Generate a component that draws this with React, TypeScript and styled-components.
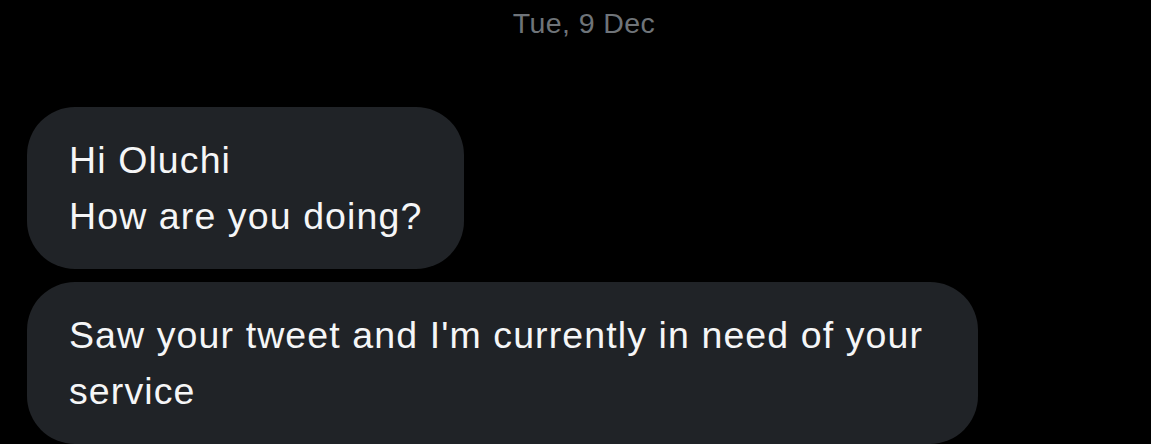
import React from "react";
import styled, { createGlobalStyle } from "styled-components";

const GlobalStyle = createGlobalStyle`
  html, body {
    margin: 0;
    padding: 0;
    background: #000000;
  }
  body {
    font-family: "Liberation Sans", Arial, sans-serif;
    -webkit-font-smoothing: antialiased;
  }
`;

const Page = styled.div`
  width: 1151px;
  height: 444px;
  box-sizing: border-box;
  overflow: hidden;
  background: #000000;
  display: flex;
  flex-direction: column;
  padding: 6px 0 0 27px;
`;

const DateLabel = styled.div`
  align-self: center;
  margin-left: -10px;
  font-size: 28.5px;
  line-height: 34px;
  color: #6f7479;
  letter-spacing: 0.4px;
`;

const Thread = styled.div`
  display: flex;
  flex-direction: column;
  align-items: flex-start;
  gap: 13px;
  margin-top: 67px;
`;

const Bubble = styled.div`
  box-sizing: border-box;
  max-width: 951px;
  width: fit-content;
  padding: 25px 42px 25px 42px;
  background: #202327;
  border-radius: 48px;
  color: #f5f6f7;
  font-size: 37.5px;
  line-height: 56px;
  letter-spacing: 1.1px;
  white-space: pre-line;
`;

const messages = [
  "Hi Oluchi\nHow are you doing?",
  "Saw your tweet and I'm currently in need of your service",
];

export default function App() {
  return (
    <>
      <GlobalStyle />
      <Page>
        <DateLabel>Tue, 9 Dec</DateLabel>
        <Thread>
          {messages.map((m, i) => (
            <Bubble key={i}>{m}</Bubble>
          ))}
        </Thread>
      </Page>
    </>
  );
}
